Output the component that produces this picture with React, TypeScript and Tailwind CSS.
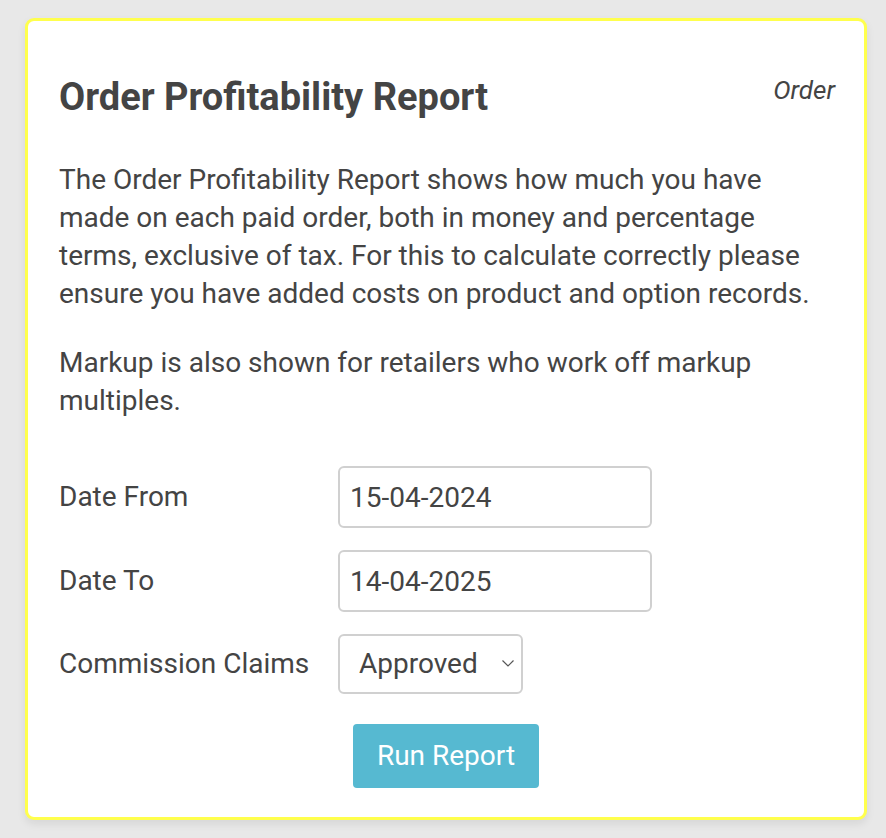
export default function App() {
  return (
    <div className="min-h-[838px] bg-[#e8e8e8] pl-[25px] pr-[19px] pt-[18px] font-['Roboto',sans-serif] text-[#444]">
      <div className="rounded-[9px] border-[3px] border-[#ffff4d] bg-white px-[31px] pt-[54px] pb-[29px] shadow-[0_4px_8px_rgba(0,0,0,0.08)]">
        {/* header */}
        <div className="flex items-start justify-between">
          <h2 className="text-[38px] leading-[44px] font-bold">Order Profitability Report</h2>
          <span className="mr-[-2px] mt-[-1px] text-[26px] leading-[32px] italic">Order</span>
        </div>

        <p className="mt-[42px] text-[28px] leading-[38px]">
          The Order Profitability Report shows how much you have made on each paid order, both in money
          and percentage terms, exclusive of tax. For this to calculate correctly please ensure you have
          added costs on product and option records.
        </p>
        <p className="mt-[31px] text-[28px] leading-[38px]">
          Markup is also shown for retailers who work off markup multiples.
        </p>

        {/* form */}
        <div className="mt-[46px] flex flex-col gap-[22px]">
          <div className="flex items-center">
            <label className="w-[279px] text-[28px]">Date From</label>
            <input
              readOnly
              value="15-04-2024"
              className="h-[62px] w-[314px] rounded-[6px] border-2 border-[#d0d0d0] px-[10px] text-[28px] text-[#444] outline-none"
            />
          </div>
          <div className="flex items-center">
            <label className="w-[279px] text-[28px]">Date To</label>
            <input
              readOnly
              value="14-04-2025"
              className="h-[62px] w-[314px] rounded-[6px] border-2 border-[#d0d0d0] px-[10px] text-[28px] text-[#444] outline-none"
            />
          </div>
          <div className="flex items-center">
            <label className="w-[279px] text-[28px]">Commission Claims</label>
            <div className="relative">
              <select
                defaultValue="Approved"
                className="h-[60px] w-[185px] appearance-none rounded-[6px] border-2 border-[#d0d0d0] bg-white pl-[19px] text-[28px] text-[#444] outline-none"
              >
                <option>Approved</option>
                <option>Pending</option>
                <option>All</option>
              </select>
              {/* select arrow */}
              <svg
                viewBox="0 0 12 7"
                className="pointer-events-none absolute right-[9px] top-[26px] h-[7px] w-[12px]"
                fill="none"
                stroke="#555"
                strokeWidth="1.2"
              >
                <polyline points="0.5,0.5 6,6 11.5,0.5" />
              </svg>
            </div>
          </div>
        </div>

        <div className="mt-[30px] flex justify-center">
          <button className="h-[64px] w-[186px] rounded-[4px] bg-[#56b9d1] text-[28px] text-white">
            Run Report
          </button>
        </div>
      </div>
    </div>
  );
}
